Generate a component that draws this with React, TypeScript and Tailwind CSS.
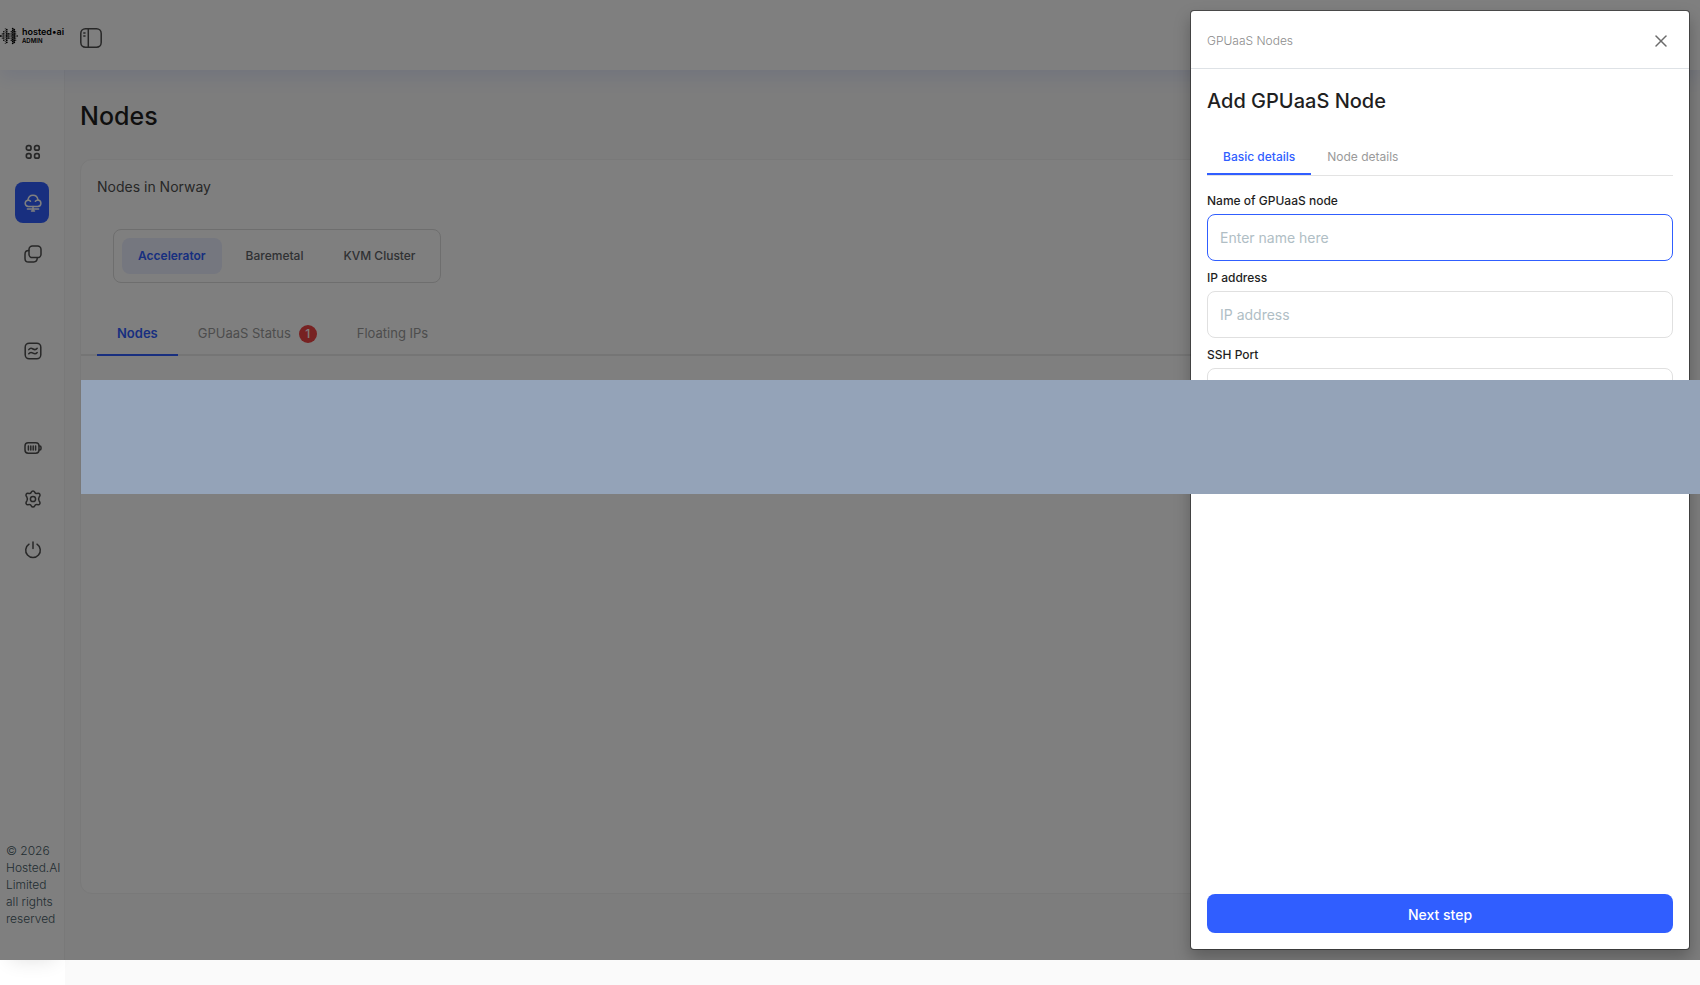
import React, { useState } from 'react';
import { X } from 'lucide-react';

const iconProps = {
    width: 18,
    height: 18,
    viewBox: '0 0 18 18',
    fill: 'none',
    stroke: 'currentColor',
    strokeWidth: 1.5,
    strokeLinecap: 'round' as const,
    strokeLinejoin: 'round' as const,
};

const DashboardIcon = () => (
    <svg {...iconProps} strokeWidth={1.7}>
        <rect x="2.4" y="2.6" width="4.6" height="4.6" rx="1.8" />
        <rect x="10.6" y="2.6" width="4.6" height="4.6" rx="1.8" />
        <rect x="2.4" y="10.6" width="4.6" height="4.6" rx="1.8" />
        <rect x="10.6" y="10.6" width="4.6" height="4.6" rx="1.8" />
    </svg>
);

const CloudIcon = () => (
    <svg {...iconProps}>
        <path d="M4.4 12.6C2.6 12.4 1.2 11 1.2 9.3c0-1.6 1.1-2.8 2.7-3.1C4.3 3.2 6.3 1.2 9 1.2c2.7 0 4.6 2 5 4.8 1.7.3 2.9 1.6 2.9 3.3 0 1.8-1.5 3.2-3.3 3.3H4.4Z" />
        <path d="M3.9 6.2c1.1-.1 2 .3 2.600 1M11.4 7.3c.6-.8 1.500-1.3 2.6-1.3" />
        <path d="M9 12.600v3.2M3.400 15h11.200M7.500 17h3" />
    </svg>
);

const LayersIcon = () => (
    <svg {...iconProps}>
        <rect x="5" y="1" width="12" height="11.6" rx="3.4" />
        <path d="M4.8 5.6C2.4 5.6 1 7 1 9.2v4.2C1 15.6 2.4 17 4.6 17h5.2c2.200 0 3.400-1.400 3.500-4.200" />
    </svg>
);

const FlowIcon = () => (
    <svg {...iconProps}>
        <rect x="1.2" y="1.2" width="15.6" height="15.6" rx="4" />
        <path d="M4.8 7.6C6 6 7.4 6 9 7c1.6 1 3 .9 4.200-.7M4.8 11.8C6 10.2 7.4 10.2 9 11.2c1.6 1 3 .9 4.200-.7" />
    </svg>
);

const BatteryIcon = () => (
    <svg {...iconProps}>
        <rect x="1" y="3.8" width="14" height="10.4" rx="3.2" />
        <path d="M15.200 7h.6c.8 0 1.200.4 1.200 1.200v1.600c0 .8-.4 1.200-1.200 1.200h-.6M4.400 7v4M6.800 7v4M9.200 7v4M11.600 7v4" />
    </svg>
);

const SettingsIcon = () => (
    <svg {...iconProps}>
        <circle cx="9" cy="9" r="2.6" />
        <path d="M7.300 2.100c.7-1.500 2.700-1.500 3.400 0 .4 1 1.500 1.600 2.500 1.300l.7-.1c1.700-.2 2.700 1.500 1.800 2.900l-.5.700c-.7 1.200-.7 3 0 4.200l.5.700c.9 1.400-.1 3.100-1.800 2.900l-.7-.1c-1-.3-2.100.3-2.500 1.300-.7 1.500-2.700 1.500-3.400 0-.4-1-1.500-1.600-2.500-1.300l-.7.1c-1.700.2-2.700-1.500-1.800-2.900l.5-.7c.7-1.200.7-3 0-4.200l-.5-.7c-.9-1.400.1-3.100 1.800-2.900l.7.1c1 .3 2.100-.3 2.500-1.300Z" />
    </svg>
);

const PowerIcon = () => (
    <svg {...iconProps}>
        <path d="M9 1v6.6M5 3.2a7.300 7.300 0 1 0 8 0" />
    </svg>
);

const PanelIcon = () => (
    <svg width="22" height="20" viewBox="0 0 22 20" fill="none" stroke="currentColor" strokeWidth="1.5" strokeLinecap="round">
        <rect x="0.8" y="0.8" width="20.4" height="18.4" rx="4.6" />
        <path d="M8.300 1v18M3.800 5h1.200M3.800 8h1.200" />
    </svg>
);

// dots per column and dot radius in the logo mark
const logoColumns = [
    { count: 1, r: 0.9 },
    { count: 3, r: 0.6 },
    { count: 5, r: 0.8 },
    { count: 8, r: 0.5 },
    { count: 7, r: 0.9 },
    { count: 3, r: 0.8 },
    { count: 3, r: 0.6 },
    { count: 5, r: 0.7 },
    { count: 8, r: 0.9 },
    { count: 7, r: 1 },
    { count: 5, r: 0.6 },
    { count: 1, r: 0.8 },
];

const Logo = () => (
    <div className="flex items-center gap-1 pb-1">
        <svg width="18" height="18" viewBox="0 0 18 18" fill="#000">
            {logoColumns.map(({ count, r }, col) =>
                Array.from({ length: count }, (_, row) => (
                    <circle key={`${col}-${row}`} cx={0.8 + col * 1.49} cy={9 + (row - (count - 1) / 2) * 2.1} r={r} />
                ))
            )}
        </svg>
        <div className="text-black">
            <div className="text-[9px] leading-[10px] font-semibold whitespace-nowrap">hosted•ai</div>
            <div className="text-[6px] leading-[8px] font-semibold">ADMIN</div>
        </div>
    </div>
);

const navItems = [
    { label: 'Dashboard', icon: <DashboardIcon />, className: 'text-[#4f4f4f]' },
    { label: 'Nodes', icon: <CloudIcon />, className: 'bg-[#305eff] text-white' },
    { label: 'Pools', icon: <LayersIcon />, className: 'text-[#4f4f4f]' },
    { label: 'Workloads', icon: <FlowIcon />, className: 'mt-[46px] text-[#4f4f4f]' },
    { label: 'Billing', icon: <BatteryIcon />, className: 'mt-[46px] text-[#4f4f4f]' },
    { label: 'Settings', icon: <SettingsIcon />, className: 'text-[#4f4f4f]' },
    { label: 'Log out', icon: <PowerIcon />, className: 'text-[#4f4f4f]' },
];

const fields = [
    { id: 'node-name', label: 'Name of GPUaaS node', placeholder: 'Enter name here' },
    { id: 'ip-address', label: 'IP address', placeholder: 'IP address' },
    { id: 'ssh-port', label: 'SSH Port', placeholder: '' },
];

const Sidebar = () => (
    <aside className="flex w-[65px] shrink-0 flex-col items-center border-r border-[#f3f3f3] bg-white pt-[61px] shadow-[0_10px_20px_-10px_rgba(0,0,0,0.12)]">
        <nav className="flex flex-col gap-[10px]">
            {navItems.map((item) => (
                <button
                    key={item.label}
                    type="button"
                    aria-label={item.label}
                    className={`flex h-[41px] w-[34px] items-center justify-center rounded-lg pl-0.5 ${item.className}`}
                >
                    {item.icon}
                </button>
            ))}
        </nav>
        <p className="mt-auto mb-[33px] w-full pl-1.5 text-[12px] leading-[17px] font-light text-[#455a64]">
            © 2026 Hosted.AI Limited <br />
            all rights reserved
        </p>
    </aside>
);

const NodesPage = () => {
    const [cluster, setCluster] = useState('Accelerator');

    return (
        <main className="flex min-w-0 flex-1 flex-col bg-[#fafafa] px-[15px] pt-7 pb-[66px]">
            <h1 className="text-[25px] leading-9 font-medium text-[#1f1f1f]">Nodes</h1>
            <section className="mt-[25px] flex-1 rounded-xl border border-[#f3f3f3] bg-white">
                <h2 className="px-4 pt-[17px] text-[14px] leading-5 text-[#4f4f4f]">Nodes in Norway</h2>
                <div className="mt-8 ml-8 flex w-fit gap-2 rounded-lg border border-[#dcdcdc] p-2">
                    {['Accelerator', 'Baremetal', 'KVM Cluster'].map((name) => (
                        <button
                            key={name}
                            type="button"
                            onClick={() => setCluster(name)}
                            className={`h-9 rounded-lg px-4 text-[12px] ${
                                cluster === name ? 'bg-[#eaeefe] font-semibold text-[#305eff]' : 'font-medium text-[#5f6368]'
                            }`}
                        >
                            {name}
                        </button>
                    ))}
                </div>
                <div className="mt-[31px] flex h-[42px] border-b-2 border-[#ebebeb] px-4 text-[13px] text-[#9a9a9a]">
                    <button type="button" className="-mb-0.5 border-b-2 border-[#305eff] px-5 font-semibold text-[#305eff]">
                        Nodes
                    </button>
                    <button type="button" className="flex items-center gap-2 px-5">
                        GPUaaS Status
                        <span className="flex size-[18px] items-center justify-center rounded-full bg-[#ef4444] text-[12px] font-medium text-white">
                            1
                        </span>
                    </button>
                    <button type="button" className="px-5">
                        Floating IPs
                    </button>
                </div>
            </section>
        </main>
    );
};

const AddNodeDrawer = () => {
    const [values, setValues] = useState<Record<string, string>>({});

    const handleChange = (e: React.ChangeEvent<HTMLInputElement>) => {
        setValues({ ...values, [e.target.id]: e.target.value });
    };

    return (
        <div
            role="dialog"
            aria-labelledby="drawer-title"
            className="absolute inset-y-[10px] right-[10px] flex w-[500px] flex-col rounded border border-black/40 bg-white bg-clip-padding shadow-[0_8px_16px_rgba(0,0,0,0.25)]"
        >
            <div className="flex h-[58px] items-center justify-between border-b border-[#dee2e6] px-4 pt-0.5">
                <span className="text-[12px] font-light text-[#8c8c8c]">GPUaaS Nodes</span>
                <button type="button" aria-label="Close" className="p-0.5 text-[#6b6b6b]">
                    <X size={20} strokeWidth={1.8} />
                </button>
            </div>
            <form className="flex flex-1 flex-col p-4" onSubmit={(e) => e.preventDefault()}>
                <h2 id="drawer-title" className="text-[20px] leading-8 font-medium text-[#1f1f1f]">
                    Add GPUaaS Node
                </h2>
                <div className="mt-[22px] flex h-[37px] border-b border-[#e3e3e3] text-[12px]">
                    <button type="button" className="border-b-2 border-[#305eff] px-4 pt-0.5 font-medium text-[#305eff]">
                        Basic details
                    </button>
                    <button type="button" className="px-4 text-[#9a9a9a]">
                        Node details
                    </button>
                </div>
                <div className="mt-4 flex flex-col gap-2">
                    {fields.map((field) => (
                        <div key={field.id} className="flex flex-col gap-1">
                            <label htmlFor={field.id} className="text-[12px] leading-[18px] font-medium text-[#1f1f1f]">
                                {field.label}
                            </label>
                            <input
                                id={field.id}
                                value={values[field.id] || ''}
                                onChange={handleChange}
                                placeholder={field.placeholder}
                                className={`h-[47px] w-full rounded-lg border px-3 text-[14px] outline-none placeholder:text-[#b0bec5] ${
                                    field.id === 'node-name' ? 'border-[#305eff]' : 'border-[#e0e0e0]'
                                }`}
                            />
                        </div>
                    ))}
                </div>
                <button type="submit" className="mt-auto h-[39px] rounded-lg bg-[#305eff] pt-0.5 text-[14px] font-medium text-white">
                    Next step
                </button>
            </form>
        </div>
    );
};

const App: React.FC = () => (
    <div className="relative min-h-screen bg-[linear-gradient(to_right,#fff_65px,#fafafa_65px)] font-[Inter,'Liberation_Sans',sans-serif]">
        <div className="flex h-[calc(100vh-25px)] flex-col">
            <header className="relative flex h-[70px] shrink-0 items-center gap-4 bg-white pt-1.5 shadow-[0_8px_16px_rgba(48,94,255,0.1)]">
                <Logo />
                <button type="button" aria-label="Toggle sidebar" className="text-[#4f4f4f]">
                    <PanelIcon />
                </button>
            </header>
            <div className="flex min-h-0 flex-1">
                <Sidebar />
                <NodesPage />
            </div>
        </div>
        <div className="absolute inset-x-0 top-0 bottom-[25px] overflow-hidden bg-black/50">
            <AddNodeDrawer />
        </div>
        <div className="absolute top-[380px] right-0 left-[81px] h-[114px] bg-[#94a3b8]" />
    </div>
);

export default App;
